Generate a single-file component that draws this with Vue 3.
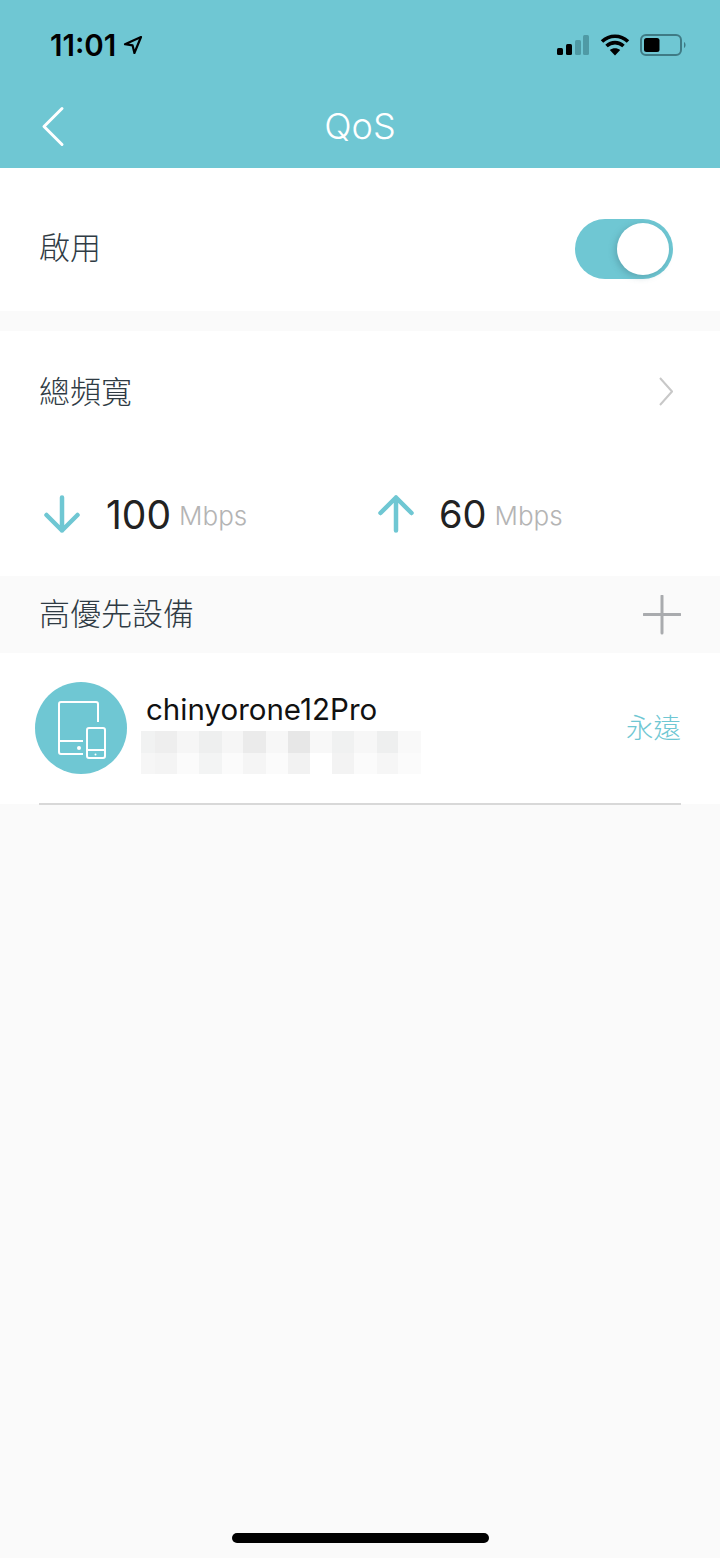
<script setup>
const top = ['#f1f2f2','#eeeeee','#f6f6f6','#eeefef','#f6f6f6','#ebebeb','#f7f7f7','#e7e7e7','#f8f8f8','#f0f1f1','#f7f7f7','#eeefef','#f9f9f9']
const bottom = ['#f6f6f6','#f4f4f4','#fbfbfb','#f3f4f4','#fbfbfb','#f5f5f5','#fbfbfb','#f2f2f2','#ffffff','#f3f3f3','#fbfbfb','#f6f6f6','#fbfbfb']
const widths = [14,22,22,23,21,23,22,22,22,22,23,21,23]
const cols = widths.map(w => w + 'px').join(' ')
</script>

<template>
  <div class="page">
    <header class="header">
      <div class="status">
        <div class="time">
          <span>11:01</span>
          <svg class="loc" width="20" height="20" viewBox="0 0 20 20"><path d="M18 2 2 9.2l7.6 1.2L11.4 18Z" fill="none" stroke="#000" stroke-width="2.2" stroke-linejoin="round"/></svg>
        </div>
        <div class="sys">
          <svg width="32" height="20" viewBox="0 0 32 20">
            <rect x="0" y="13" width="6" height="7" rx="1.5" fill="#000"/>
            <rect x="9" y="9" width="6" height="11" rx="1.5" fill="#000"/>
            <rect x="18" y="5" width="6" height="15" rx="1.5" fill="#4f9aa5"/>
            <rect x="26" y="0" width="6" height="20" rx="1.5" fill="#4f9aa5"/>
          </svg>
          <svg class="wifi" width="30" height="22" viewBox="0 0 30 22">
            <path d="M2 7.5C9.500.5 20.500.5 28 7.500M6.500 12C11.500 7.500 18.500 7.500 23.500 12" fill="none" stroke="#000" stroke-width="3.600"/>
            <path d="M15 21.500 9.800 16C12.800 13.500 17.200 13.500 20.200 16Z" fill="#000"/>
          </svg>
          <svg class="batt" width="46" height="22" viewBox="0 0 46 22">
            <rect x="1" y="1" width="40" height="20" rx="5" fill="none" stroke="#3f7b85" stroke-width="2"/>
            <rect x="4" y="4" width="15.500" height="14" rx="2.500" fill="#000"/>
            <path d="M44 8c2 .7 2 5.300 0 6Z" fill="#3f7b85"/>
          </svg>
        </div>
      </div>
      <div class="nav">
        <svg class="back" width="24" height="42" viewBox="0 0 24 42"><path d="M21 2.500 3 20.500l18 18" fill="none" stroke="#fff" stroke-width="3" stroke-linecap="round" stroke-linejoin="round"/></svg>
        <h1 class="title">QoS</h1>
      </div>
    </header>

    <section class="row enable">
      <span class="label">啟用</span>
      <div class="switch"><div class="knob"></div></div>
    </section>

    <section class="bandwidth">
      <div class="row total">
        <span class="label">總頻寬</span>
        <svg class="chev" width="14" height="30" viewBox="0 0 14 30"><path d="M1 1 13 14.500 1 28" fill="none" stroke="#c8c8c8" stroke-width="2"/></svg>
      </div>
      <div class="speeds">
        <div class="speed">
          <svg width="40" height="40" viewBox="0 0 40 40"><path d="M20 3.500v33M4.500 21 20 36.500 35.500 21" fill="none" stroke="#6fc7d3" stroke-width="4.500" stroke-linecap="round" stroke-linejoin="round"/></svg>
          <strong class="num">100</strong><span class="unit">Mbps</span>
        </div>
        <div class="speed up">
          <svg width="40" height="40" viewBox="0 0 40 40"><path d="M20 36.500v-33M4.500 19 20 3.500 35.500 19" fill="none" stroke="#6fc7d3" stroke-width="4.500" stroke-linecap="round" stroke-linejoin="round"/></svg>
          <strong class="num">60</strong><span class="unit">Mbps</span>
        </div>
      </div>
    </section>

    <section class="row prio">
      <span class="label">高優先設備</span>
      <svg width="38" height="40" viewBox="0 0 38 40"><path d="M19 1v37M1 19.500h36" fill="none" stroke="#a9abae" stroke-width="3" stroke-linecap="round"/></svg>
    </section>

    <section class="device">
      <div class="avatar">
        <svg width="52" height="64" viewBox="0 0 52 64" fill="none" stroke="#fff" stroke-width="2">
          <path d="M28 58H6a2 2 0 0 1-2-2V8a2 2 0 0 1 2-2h35a2 2 0 0 1 2 2v18"/>
          <path d="M4 45h24"/>
          <rect x="32" y="32" width="18" height="30" rx="2"/>
          <path d="M32 54h18"/>
          <circle cx="24" cy="52" r="2" fill="#fff" stroke="none"/>
          <circle cx="40.500" cy="58.500" r="1" fill="#fff" stroke="none"/>
        </svg>
      </div>
      <div class="info">
        <div class="name">chinyorone12Pro</div>
        <div class="mosaic" :style="{ gridTemplateColumns: cols }">
          <i v-for="(c, i) in top" :key="'t' + i" :style="{ background: c }"></i>
          <i v-for="(c, i) in bottom" :key="'b' + i" :style="{ background: c }"></i>
        </div>
      </div>
      <span class="always">永遠</span>
      <div class="rule"></div>
    </section>

    <div class="home"></div>
  </div>
</template>

<style>
html, body { margin: 0; background: #fafafa; }
</style>

<style scoped>
.page {
  position: relative;
  width: 720px;
  height: 1558px;
  overflow: hidden;
  background: #fafafa;
  font-family: Inter, "Noto Sans CJK TC", sans-serif;
}
.header {
  height: 168px;
  background: #6fc7d3;
  display: flex;
  flex-direction: column;
}
.status {
  height: 88px;
  display: flex;
  justify-content: space-between;
  padding: 0 34px 0 50px;
}
.time {
  display: flex;
  align-items: center;
  gap: 7px;
  padding-top: 2px;
  height: 88px;
  box-sizing: border-box;
  font-size: 29.5px;
  font-weight: 600;
  color: #000;
}
.sys {
  display: flex;
  align-items: center;
  gap: 10.5px;
  padding-top: 2px;
}
.nav {
  position: relative;
  height: 80px;
  box-sizing: border-box;
  padding-bottom: 4px;
  display: flex;
  align-items: center;
  justify-content: center;
}
.back {
  position: absolute;
  left: 41px;
  top: 18px;
}
.title {
  margin: 0;
  font-size: 36px;
  font-weight: 300;
  color: #fff;
}
.row {
  display: flex;
  align-items: center;
  justify-content: space-between;
  box-sizing: border-box;
  background: #fff;
}
.label {
  padding-bottom: 7px;
  font-family: "Noto Sans CJK TC", sans-serif;
  font-size: 31px;
  font-weight: 300;
  color: #2f3b44;
}
.enable {
  height: 143px;
  padding: 19px 47px 0 39px;
}
.switch {
  width: 98px;
  height: 60px;
  border-radius: 30px;
  background: #6fc7d3;
  position: relative;
}
.knob {
  position: absolute;
  right: 4px;
  top: 4px;
  width: 52px;
  height: 52px;
  border-radius: 50%;
  background: #fff;
  box-shadow: -2px 2px 6px rgba(60, 110, 120, 0.35);
}
.bandwidth {
  margin-top: 20px;
  height: 245px;
  background: #fff;
}
.total {
  height: 123px;
  padding: 0 47px 0 39px;
}
.chev {
  margin-bottom: 2px;
}
.speeds {
  display: grid;
  grid-template-columns: 334px 1fr;
  padding-left: 42px;
  height: 122px;
}
.speed {
  display: flex;
  align-items: center;
  box-sizing: border-box;
  height: 122px;
  padding-bottom: 2px;
}
.num {
  margin-left: 24px;
  font-size: 39px;
  font-weight: 400;
  color: #222;
}
.up .num {
  margin-left: 23px;
  font-size: 38px;
}
.unit {
  margin-left: 8px;
  padding-top: 2px;
  font-size: 26px;
  font-weight: 300;
  color: #b4b4b4;
}
.prio {
  height: 77px;
  background: #fafafa;
  padding: 0 39px;
}
.device {
  position: relative;
  height: 151px;
  background: #fff;
  display: flex;
  align-items: center;
  padding: 0 39px 0 35px;
}
.avatar {
  width: 92px;
  height: 92px;
  margin-bottom: 2px;
  border-radius: 50%;
  background: #6fc7d3;
  display: flex;
  align-items: center;
  justify-content: center;
}
.info {
  flex: 1;
  margin-left: 14px;
  padding-top: 8px;
}
.name {
  margin-left: 5px;
  font-size: 29.5px;
  font-weight: 400;
  line-height: 36px;
  color: #111;
}
.mosaic {
  display: grid;
  grid-auto-rows: 21.5px;
  width: 280px;
  margin-top: 4px;
}
.always {
  padding-bottom: 6px;
  font-family: "Noto Sans CJK TC", sans-serif;
  font-size: 27.5px;
  font-weight: 300;
  color: #6fc7d3;
}
.rule {
  position: absolute;
  left: 39px;
  right: 39px;
  bottom: -1px;
  height: 2px;
  background: #d8d8d8;
}
.home {
  position: absolute;
  left: 232px;
  top: 1533px;
  width: 257px;
  height: 10px;
  border-radius: 5px;
  background: #000;
}
</style>
